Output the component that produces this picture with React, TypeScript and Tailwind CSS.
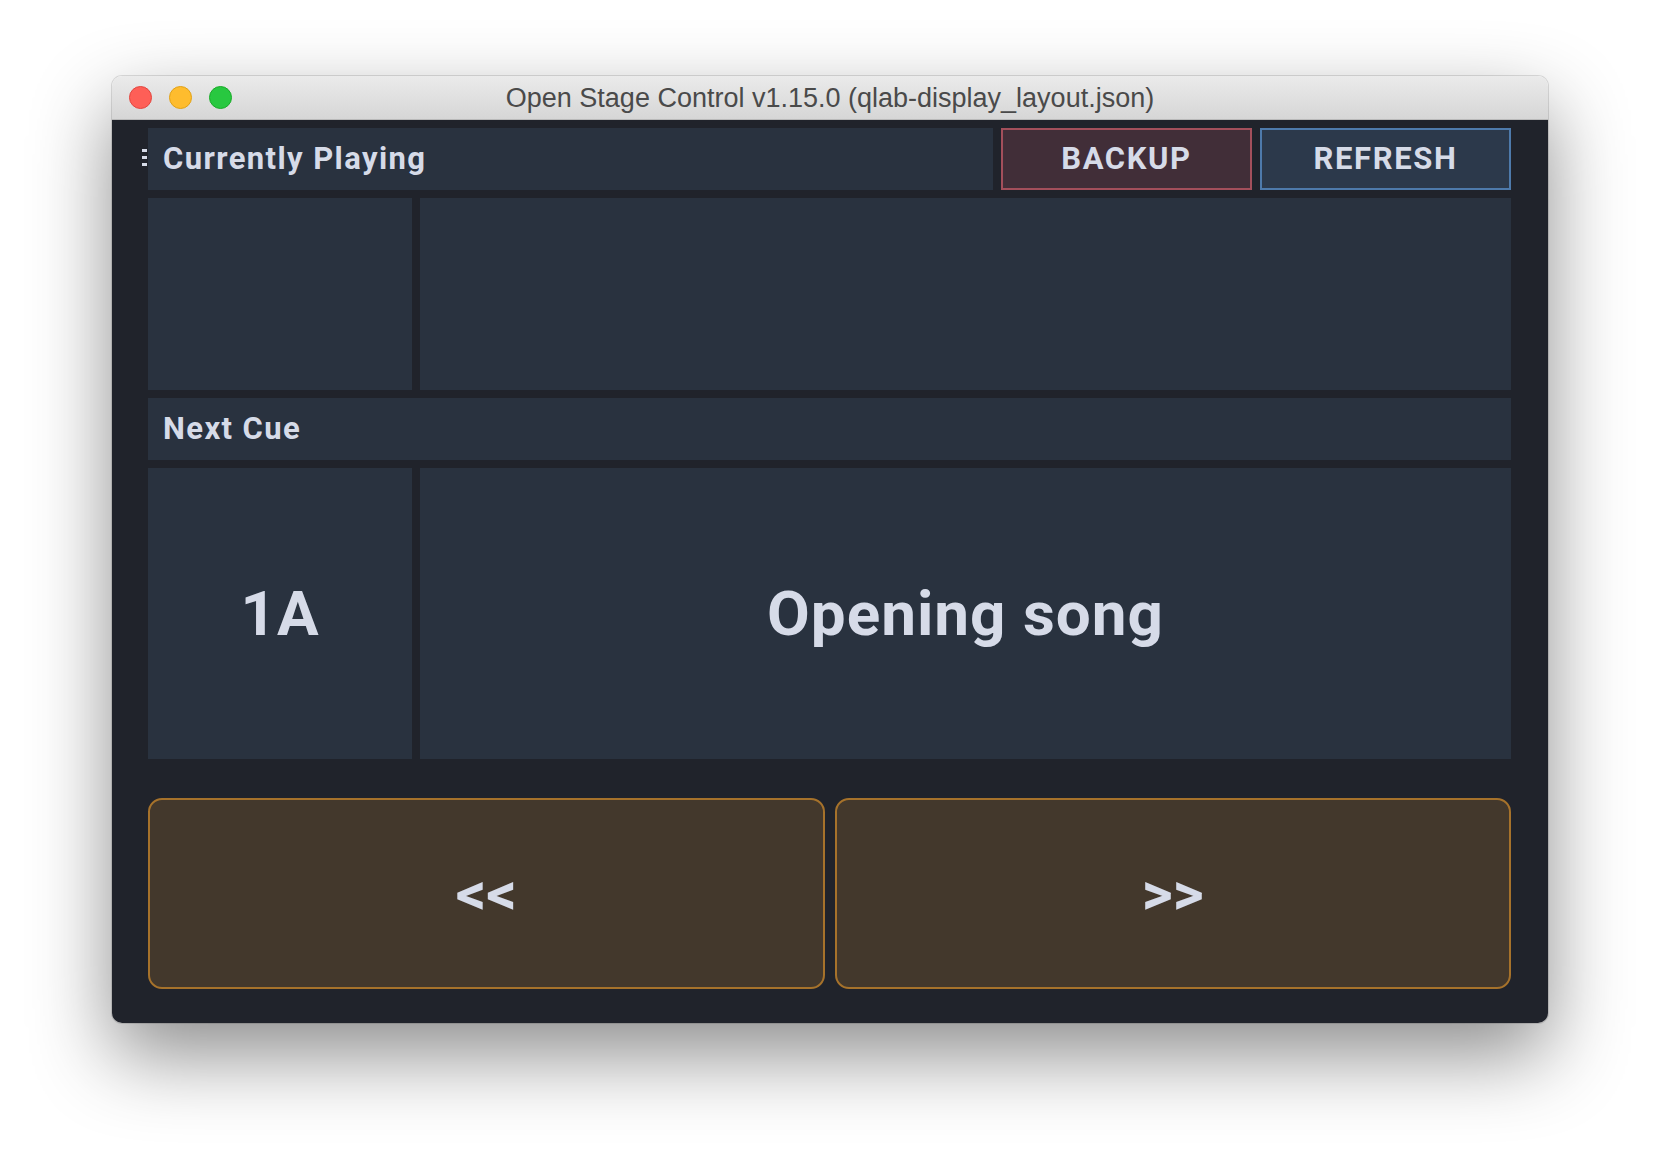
import React from "react";

const TrafficLights = () => {
	return (
		<div className="absolute left-[17px] top-[10px] flex items-center gap-[17px]">
			<div className="size-[23px] rounded-full bg-[#fe5f57] border border-[#e2463f]" />
			<div className="size-[23px] rounded-full bg-[#febc2e] border border-[#e1a116]" />
			<div className="size-[23px] rounded-full bg-[#28c840] border border-[#1aab29]" />
		</div>
	);
};

const MenuIcon = () => {
	return (
		<div className="absolute left-[-6px] top-[21px] flex flex-col gap-[4px]">
			<div className="h-[3px] w-[5px] bg-[#d6dbe8]" />
			<div className="h-[3px] w-[5px] bg-[#d6dbe8]" />
			<div className="h-[3px] w-[5px] bg-[#d6dbe8]" />
		</div>
	);
};

const Panel = ({ className = "", children }: { className?: string; children?: React.ReactNode }) => {
	return <div className={`bg-[#29323f] ${className}`}>{children}</div>;
};

const Label = ({ text }: { text: string }) => {
	return (
		<Panel className="h-[62px] flex items-center pl-[15px]">
			<span className="text-[31px] font-bold tracking-[1.4px] text-[#d6dbe8]">{text}</span>
		</Panel>
	);
};

export default function App() {
	return (
		<div className="min-h-[1172px] w-full bg-white pl-[112px] pt-[76px] font-['Roboto',sans-serif]">
			<div className="w-[1436px] h-[947px] rounded-[10px] overflow-hidden flex flex-col shadow-[0_32px_80px_rgba(0,0,0,0.45),0_0_0_1px_rgba(0,0,0,0.12)]">
				{/* title bar */}
				<div className="relative h-[44px] shrink-0 flex items-center justify-center bg-gradient-to-b from-[#ebebeb] to-[#d6d6d6] border-b border-[#b9b9b9]">
					<TrafficLights />
					<span className="pt-[2px] font-['Liberation_Sans',Arial,sans-serif] text-[27px] text-[#4a4a4a]">
						Open Stage Control v1.15.0 (qlab-display_layout.json)
					</span>
				</div>

				{/* content */}
				<div className="flex-1 flex flex-col gap-[8px] bg-[#20232b] pl-[36px] pr-[37px] pt-[8px] pb-[34px]">
					<div className="relative flex gap-[8px] h-[62px]">
						<MenuIcon />
						<Panel className="flex-1 flex items-center pl-[15px]">
							<span className="text-[31px] font-bold tracking-[1.4px] text-[#d6dbe8]">
								Currently Playing
							</span>
						</Panel>
						<button className="w-[251px] bg-[#412e38] border-2 border-[#a34f5b] text-[31px] font-bold tracking-[1.6px] text-[#d6dbe8]">
							BACKUP
						</button>
						<button className="w-[251px] bg-[#2c394b] border-2 border-[#4e7aab] text-[31px] font-bold tracking-[1.6px] text-[#d6dbe8]">
							REFRESH
						</button>
					</div>

					<div className="flex gap-[8px] h-[192px]">
						<Panel className="w-[264px]" />
						<Panel className="flex-1" />
					</div>

					<Label text="Next Cue" />

					<div className="flex gap-[8px] h-[291px]">
						<Panel className="w-[264px] flex items-center justify-center">
							<span className="text-[62px] font-bold tracking-[1px] text-[#d6dbe8]">1A</span>
						</Panel>
						<Panel className="flex-1 flex items-center justify-center">
							<span className="text-[62px] font-bold tracking-[1px] text-[#d6dbe8]">Opening song</span>
						</Panel>
					</div>

					<div className="grid grid-cols-2 gap-[10px] h-[191px] mt-[31px]">
						<button className="rounded-[14px] bg-[#43382c] border-2 border-[#a6722b] text-[60px] font-bold text-[#d6dbe8]">
							&lt;&lt;
						</button>
						<button className="rounded-[14px] bg-[#43382c] border-2 border-[#a6722b] text-[60px] font-bold text-[#d6dbe8]">
							&gt;&gt;
						</button>
					</div>
				</div>
			</div>
		</div>
	);
}
